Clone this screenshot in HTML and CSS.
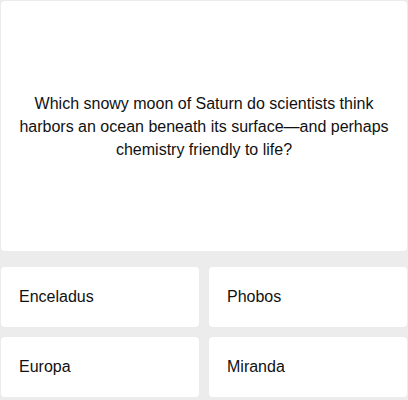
FILE: index.html
```html
<!DOCTYPE html>
<html>
<head>
<meta charset="utf-8">
<link rel="stylesheet" href="styles.css">
</head>
<body>
<div class="quiz">
  <div class="question">
    <p>Which snowy moon of Saturn do scientists think harbors an ocean beneath its surface—and perhaps chemistry friendly to life?</p>
  </div>
  <div class="answers">
    <div class="answer">Enceladus</div>
    <div class="answer">Phobos</div>
    <div class="answer">Europa</div>
    <div class="answer">Miranda</div>
  </div>
</div>
</body>
</html>
```
FILE: styles.css
```css
html, body {
  margin: 0;
  padding: 0;
  background: #ececec;
}
body {
  font-family: "Liberation Sans", Arial, sans-serif;
  color: #111;
}
.quiz {
  width: 406px;
  height: 398px;
  padding: 1px;
  display: flex;
  flex-direction: column;
  gap: 16px;
}
.question {
  background: #fff;
  border-radius: 4px;
  height: 250px;
  display: flex;
  align-items: center;
  justify-content: center;
  padding: 0 16px;
  box-sizing: border-box;
}
.question p {
  margin: 0;
  text-align: center;
  font-size: 16px;
  line-height: 23px;
}
.answers {
  display: grid;
  grid-template-columns: 1fr 1fr;
  gap: 10px;
}
.answer {
  background: #fff;
  border-radius: 4px;
  height: 60px;
  display: flex;
  align-items: center;
  padding-left: 18px;
  font-size: 16px;
}
```
